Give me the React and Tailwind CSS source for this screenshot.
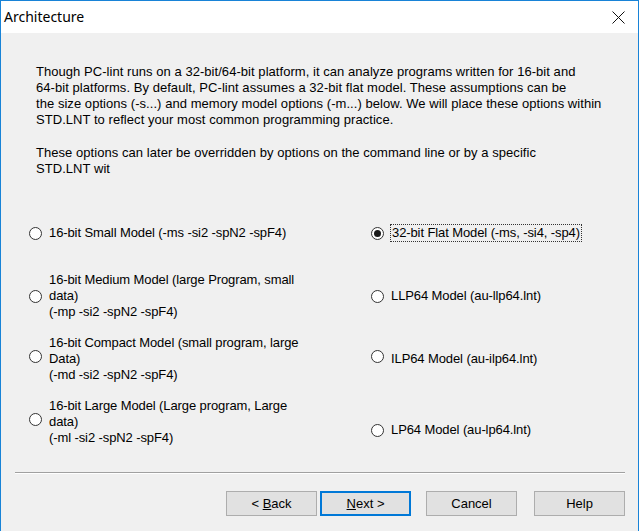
import React from "react";

function Radio({ checked }) {
  return (
    <span className="relative inline-flex h-[13px] w-[13px] shrink-0 items-center justify-center rounded-full border border-[#333333] bg-white">
      {checked && <span className="h-[7px] w-[7px] rounded-full bg-[#1a1a1a]" />}
    </span>
  );
}

function Btn({ children, def }) {
  return (
    <div
      className={
        "flex h-[25px] w-[91px] items-center justify-center bg-[#e1e1e1] text-[13px] text-black " +
        (def ? "border-2 border-[#0078d7]" : "border border-[#adadad]")
      }
    >
      <span className="whitespace-pre">{children}</span>
    </div>
  );
}

export default function App() {
  return (
    <div
      className="flex h-[531px] w-[639px] flex-col border-x border-t border-[#1883d7] bg-[#f0f0f0] text-black"
      style={{ fontFamily: '"Liberation Sans", Arial, sans-serif' }}
    >
      <div className="flex h-[32px] shrink-0 items-center justify-between bg-white pl-[3px] pr-[13px]">
        <span
          className="text-[14px] leading-none"
          style={{ fontFamily: '"Segoe UI", "Noto Sans", sans-serif' }}
        >
          Architecture
        </span>
        <svg width="13" height="13" viewBox="0 0 13 13">
          <path d="M0.5 0.5 L12.5 12.5 M12.5 0.5 L0.5 12.5" stroke="#111" strokeWidth="1" />
        </svg>
      </div>

      <div className="flex flex-1 flex-col">
        <div className="pl-[35px] pt-[31px] text-[13px] leading-[16px] tracking-[0.05px]">
          <p>
            Though PC-lint runs on a 32-bit/64-bit platform, it can analyze programs written for 16-bit and
            <br />
            64-bit platforms. By default, PC-lint assumes a 32-bit flat model. These assumptions can be
            <br />
            the size options (-s...) and memory model options (-m...) below. We will place these options within
            <br />
            STD.LNT to reflect your most common programming practice.
          </p>
          <p className="mt-[17px]">
            These options can later be overridden by options on the command line or by a specific
            <br />
            STD.LNT wit
          </p>
        </div>

        <div className="mt-[40px] grid grid-cols-[342px_1fr] pl-[28px] text-[13px] leading-[16px] tracking-[-0.1px]">
          <div className="flex h-[32px] items-center gap-[7px]">
            <Radio />
            <span>16-bit Small Model (-ms -si2 -spN2 -spF4)</span>
          </div>
          <div className="flex h-[32px] items-center gap-[6px]">
            <Radio checked />
            <span className="border border-dotted border-[#333] px-[1px] leading-[16px]">
              32-bit Flat Model (-ms, -si4, -sp4)
            </span>
          </div>

          <div className="mt-[23px] flex h-[48px] items-center gap-[7px]">
            <Radio />
            <span>
              16-bit Medium Model (large Program, small
              <br />
              data)
              <br />
              (-mp -si2 -spN2 -spF4)
            </span>
          </div>
          <div className="mt-[23px] flex h-[48px] items-center gap-[7px]">
            <Radio />
            <span>LLP64 Model (au-llp64.lnt)</span>
          </div>

          <div className="mt-[15px] flex h-[48px] items-center gap-[7px]">
            <span className="mb-[5px] flex">
              <Radio />
            </span>
            <span>
              16-bit Compact Model (small program, large
              <br />
              Data)
              <br />
              (-md -si2 -spN2 -spF4)
            </span>
          </div>
          <div className="mt-[15px] flex h-[48px] items-center gap-[7px]">
            <span className="mb-[5px] flex">
              <Radio />
            </span>
            <span>ILP64 Model (au-ilp64.lnt)</span>
          </div>

          <div className="mt-[15px] flex h-[48px] items-center gap-[7px]">
            <span className="mb-[5px] flex">
              <Radio />
            </span>
            <span>
              16-bit Large Model (Large program, Large
              <br />
              data)
              <br />
              (-ml -si2 -spN2 -spF4)
            </span>
          </div>
          <div className="mt-[15px] flex h-[48px] items-end gap-[7px] pb-[9px]">
            <Radio />
            <span className="leading-[14px]">LP64 Model (au-lp64.lnt)</span>
          </div>
        </div>

        <div className="ml-[14px] mr-[13px] mt-[26px] h-[2px] border-t border-b border-t-[#a0a0a0] border-b-white" />

        <div className="mt-[17px] flex pr-[13px] justify-end">
          <Btn>
            &lt; <u>B</u>ack
          </Btn>
          <div className="ml-[3px]">
            <Btn def>
              <u>N</u>ext &gt;
            </Btn>
          </div>
          <div className="ml-[15px]">
            <Btn>Cancel</Btn>
          </div>
          <div className="ml-[17px]">
            <Btn>Help</Btn>
          </div>
        </div>
      </div>
    </div>
  );
}
